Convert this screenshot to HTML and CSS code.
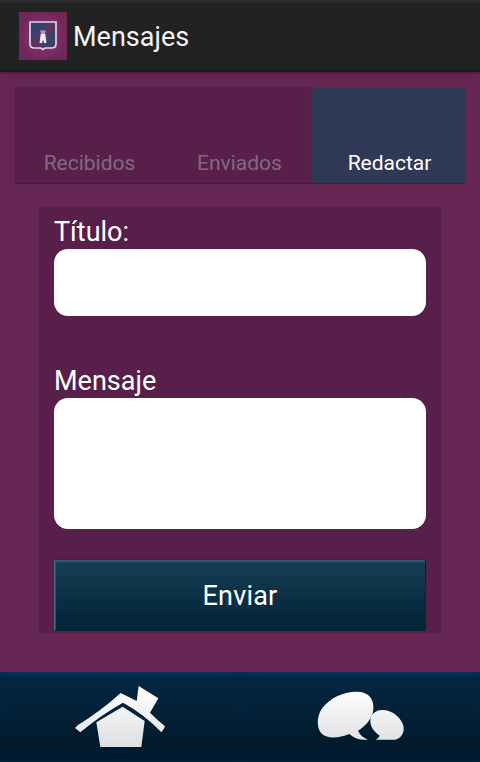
FILE: index.html
```
<!DOCTYPE html>
<html lang="es">
<head>
    <meta charset="UTF-8">
    <meta name="viewport" content="width=device-width, initial-scale=1.0">
    <title>Mensajes</title>
    <link rel="stylesheet" href="styles.css">
</head>
<body>
    <header class="header">
        <svg class="logo" viewBox="0 0 48 48">
            <defs>
                <radialGradient id="logo-bg">
                    <stop offset="0.5" stop-color="#842f6b"/>
                    <stop offset="1" stop-color="#702858"/>
                </radialGradient>
                <linearGradient id="shield" x1="0" y1="0" x2="1" y2="1">
                    <stop offset="0" stop-color="#34436b"/>
                    <stop offset="0.3" stop-color="#34436b"/>
                    <stop offset="0.5" stop-color="#65305f"/>
                    <stop offset="0.72" stop-color="#34436b"/>
                    <stop offset="1" stop-color="#5c3461"/>
                </linearGradient>
            </defs>
            <rect width="48" height="48" fill="url(#logo-bg)"/>
            <path d="M11 10H37V32Q37 36 32.5 36H26L24 37.5L22 36H15.5Q11 36 11 32Z" fill="url(#shield)" stroke="#dcd5e8" stroke-width="1.7"/>
            <path d="M21 18.5H27L26 21H22Z" fill="#a9a0bd"/>
            <path d="M21.8 21.5H26.2L27.5 31H25L24 27.5L23 31H20.5Z" fill="#eeeaf5"/>
        </svg>
        <h1>Mensajes</h1>
    </header>

    <main class="content">
        <nav class="tabs">
            <a class="tab" href="#">Recibidos</a>
            <a class="tab tab-sent" href="#">Enviados</a>
            <a class="tab active" href="#">Redactar</a>
        </nav>

        <form class="message-form">
            <label for="title">Título:</label>
            <input type="text" id="title" name="title">

            <label for="message">Mensaje</label>
            <textarea id="message" name="message"></textarea>

            <button type="submit">Enviar</button>
        </form>
    </main>

    <nav class="bottom-bar">
        <a class="bottom-link" href="#" aria-label="Inicio">
            <svg class="bottom-icon" viewBox="225 75 270 192">
                <defs>
                    <linearGradient id="icon-fill" gradientUnits="userSpaceOnUse" x1="0" y1="78" x2="0" y2="262">
                        <stop offset="0" stop-color="#ffffff"/>
                        <stop offset="1" stop-color="#dedfe1"/>
                    </linearGradient>
                </defs>
                <path d="M225 204L233 196Q305 151 362 99L410 123L416 78L475 115L450 158Q471 179 495 199L491 207L484 217Q435 164 369 128Q304 164 241 217Z" fill="url(#icon-fill)"/>
                <path d="M368 140L434 183L424 261H301L289 187Z" fill="url(#icon-fill)"/>
            </svg>
        </a>
        <a class="bottom-link" href="#" aria-label="Mensajes">
            <svg class="bottom-icon" viewBox="225 75 270 192">
                <path d="M350 95C388 95 403 119 400 149C397 175 376 199 354 212C360 225 370 233 384 239C362 241 343 236 328 222C297 234 263 237 246 222C229 206 229 169 247 144C270 113 312 95 350 95Z" fill="url(#icon-fill)"/>
                <path d="M426 150C457 149 486 174 491 201C493 219 483 235 466 239H407Q416 235 419 227C404 217 390 201 391 181C392 162 407 151 426 150Z" fill="url(#icon-fill)"/>
            </svg>
        </a>
    </nav>
</body>
</html>
```

FILE: styles.css
```
* {
    box-sizing: border-box;
    margin: 0;
    padding: 0;
    font-family: Roboto, 'Liberation Sans', sans-serif;
}

body {
    background-color: #662654;
    display: flex;
    flex-direction: column;
    height: 762px;
    color: #fff;
}

a {
    text-decoration: none;
}

.header {
    display: flex;
    align-items: center;
    height: 72px;
    padding-left: 19px;
    background: linear-gradient(#303030, #222 4px, #222 68px, #191919);
    box-shadow: 0 1px 3px rgba(40, 10, 35, 0.6);
}

.logo {
    width: 48px;
    height: 48px;
    margin-right: 6px;
}

.header h1 {
    font-size: 27px;
    font-weight: 400;
    line-height: 32px;
    margin-top: 2px;
    color: #f4f4f4;
}

.content {
    flex: 1;
    padding: 15px 15px 0;
}

.tabs {
    display: grid;
    grid-template-columns: 149px 147px 154px;
    height: 96px;
    background-color: #591f4b;
    box-shadow: 0 1px 1px rgba(50, 10, 40, 0.5);
}

.tab {
    display: flex;
    align-items: flex-end;
    justify-content: center;
    padding-bottom: 7px;
    font-size: 21px;
    line-height: 25px;
    color: #866780;
}

.tab-sent {
    padding-left: 4px;
}

.tab.active {
    background-color: #2f3855;
    color: #fff;
    padding-left: 3px;
}

.message-form {
    display: flex;
    flex-direction: column;
    height: 426px;
    margin: 24px 24px 0;
    padding: 9px 15px 2px;
    background-color: #591f4b;
    border-radius: 2px;
}

label {
    font-size: 27px;
    line-height: 33px;
}

input,
textarea {
    width: 100%;
    border: none;
    border-radius: 14px;
    background-color: #fff;
    padding: 12px;
    font-size: 24px;
    resize: none;
    outline: none;
}

input {
    height: 67px;
    margin-bottom: 49px;
}

textarea {
    height: 131px;
    margin-bottom: 30px;
}

button {
    height: 72px;
    padding-top: 2px;
    border: 1px solid #0b2338;
    border-top-color: #302a49;
    border-left-color: #426b81;
    background: linear-gradient(#173f54, #0c3147 50%, #04273a 80%, #04263a);
    box-shadow: inset 1px 2px 1px #2d5870;
    color: #fff;
    font-size: 27px;
    letter-spacing: 0.2px;
    cursor: pointer;
}

.bottom-bar {
    display: grid;
    grid-template-columns: 1fr 1fr;
    height: 90px;
}

.bottom-link {
    display: flex;
    align-items: center;
    justify-content: center;
    background: linear-gradient(#07365f, #042642 5px, #03223a 40%, #021b2d 75%, #021a2e);
    box-shadow: inset 0 0 3px #06294a;
}

.bottom-icon {
    width: 90px;
    height: 64px;
}
```
